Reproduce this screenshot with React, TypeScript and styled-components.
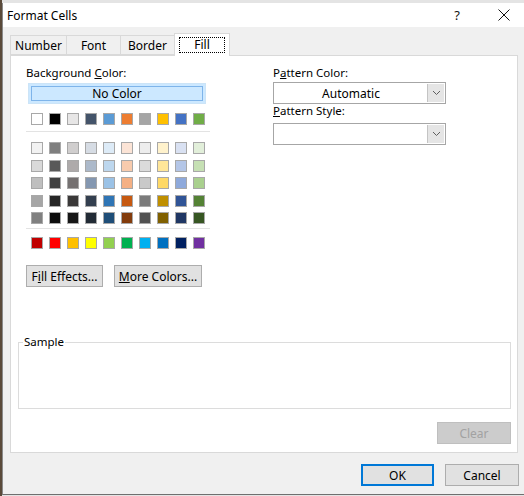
import React from "react"
import styled, { createGlobalStyle } from "styled-components"

const GlobalStyle = createGlobalStyle`
  html, body {
    margin: 0;
    padding: 0;
  }
  body {
    background: #e4e4e4;
    font-family: "Noto Sans", "Segoe UI", sans-serif;
    font-size: 11px;
    color: #000;
  }
  u {
    text-underline-offset: 1px;
  }
`

const Page = styled.div`
  width: 524px;
  height: 496px;
  padding-top: 3px;
  box-sizing: border-box;
  overflow: hidden;
  border-left: 2px solid #5a4a3a;
`

const Window = styled.div`
  width: 522px;
  height: 492px;
  box-sizing: border-box;
  border-left: 1px solid #8a8a8a;
  border-bottom: 1px solid #6f6f6f;
  background: #f0f0f0;
  display: flex;
  flex-direction: column;
`

const TitleBar = styled.div`
  height: 24px;
  flex: 0 0 24px;
  background: #fff;
  display: flex;
  align-items: center;
  padding-left: 4px;
`

const Title = styled.div`
  flex: 1;
  font-size: 12px;
`

const TitleButton = styled.div`
  width: 40px;
  height: 24px;
  display: flex;
  align-items: center;
  justify-content: center;
  font-size: 13px;
  color: #111;
  & + & {
    margin-left: 7px;
  }
`

const Body = styled.div`
  flex: 1;
  display: flex;
  flex-direction: column;
  padding: 6px 6px 0 7px;
`

const TabStrip = styled.div`
  display: flex;
  align-items: flex-end;
  height: 22px;
  position: relative;
  z-index: 1;
`

const Tab = styled.div<{ $w: number; $active?: boolean }>`
  width: ${(p) => p.$w}px;
  height: ${(p) => (p.$active ? 23 : 20)}px;
  margin-bottom: ${(p) => (p.$active ? -1 : 0)}px;
  box-sizing: border-box;
  border: 1px solid #d9d9d9;
  border-bottom: ${(p) => (p.$active ? "none" : "1px solid #d9d9d9")};
  background: ${(p) => (p.$active ? "#fff" : "#f0f0f0")};
  display: flex;
  align-items: center;
  justify-content: center;
  padding-top: 1px;
  font-size: 12px;
  & + & {
    margin-left: -1px;
  }
`

const FocusText = styled.span`
  display: flex;
  align-items: center;
  justify-content: center;
  width: 46px;
  height: 16px;
  box-sizing: border-box;
  border: 1px dotted #000;
  margin-top: -2px;
`

const Panel = styled.div`
  flex: 0 0 398px;
  box-sizing: border-box;
  background: #fff;
  border: 1px solid #d9d9d9;
  display: flex;
  flex-direction: column;
  padding: 0 6px 0 7px;
`

const TopGrid = styled.div`
  display: grid;
  grid-template-columns: 247px 173px;
  padding: 11px 0 0 8px;
`

const Column = styled.div`
  display: flex;
  flex-direction: column;
  align-items: flex-start;
`

const Label = styled.div<{ $mt?: number }>`
  line-height: 12px;
  font-size: 11.5px;
  margin-top: ${(p) => p.$mt ?? 0}px;
  white-space: nowrap;
`

const NoColorButton = styled.div`
  margin: 4px 0 0 2px;
  width: 178px;
  height: 21px;
  box-sizing: border-box;
  background: #cce8ff;
  border: 1px solid #cce4f7;
  padding: 2px;
  display: flex;
`

const NoColorInner = styled.div`
  flex: 1;
  border: 1px solid #7eb4ea;
  display: flex;
  align-items: center;
  justify-content: center;
  font-size: 12px;
`

const SwatchRow = styled.div<{ $mt: number }>`
  display: flex;
  gap: 6px;
  margin-top: ${(p) => p.$mt}px;
  padding-left: 5px;
`

const SwatchGrid = styled.div`
  display: grid;
  grid-template-columns: repeat(10, 12px);
  column-gap: 6px;
  row-gap: 5.5px;
  margin-top: 10px;
  padding-left: 5px;
`

const Swatch = styled.span<{ $c: string }>`
  display: block;
  width: 12px;
  height: 12px;
  box-sizing: border-box;
  border: 1px solid #a8a8a8;
  background: ${(p) => p.$c};
`

const Divider = styled.div<{ $mt: number }>`
  width: 184px;
  height: 1px;
  background: #e3e3e3;
  margin-top: ${(p) => p.$mt}px;
`

const ButtonRow = styled.div`
  display: flex;
  gap: 11px;
  margin-top: 16px;
`

const PushButton = styled.div<{ $w: number; $disabled?: boolean; $primary?: boolean }>`
  width: ${(p) => p.$w}px;
  height: 22px;
  box-sizing: border-box;
  border: ${(p) => (p.$primary ? "2px solid #0078d7" : p.$disabled ? "1px solid #bfbfbf" : "1px solid #adadad")};
  background: ${(p) => (p.$disabled ? "#cccccc" : "#e1e1e1")};
  color: ${(p) => (p.$disabled ? "#a2a2a2" : "#000")};
  display: flex;
  align-items: center;
  justify-content: center;
  font-size: 12px;
  white-space: nowrap;
`

const Combo = styled.div<{ $mt: number }>`
  margin-top: ${(p) => p.$mt}px;
  width: 173px;
  height: 22px;
  box-sizing: border-box;
  border: 1px solid #a6a6a6;
  background: #fff;
  display: flex;
  padding: 1px;
`

const ComboText = styled.div`
  flex: 1;
  display: flex;
  align-items: center;
  justify-content: center;
  font-size: 12px;
`

const ComboArrow = styled.div`
  width: 16px;
  background: #e5e5e5;
  border-left: 1px solid #c4c4c4;
  display: flex;
  align-items: center;
  justify-content: center;
`

const SampleBox = styled.fieldset`
  margin: 49px 0 0 0;
  padding: 0 4px;
  height: 73px;
  box-sizing: border-box;
  border: 1px solid #dcdcdc;
`

const SampleLegend = styled.legend`
  padding: 0 1px;
  line-height: 12px;
  font-size: 11.5px;
`

const ClearRow = styled.div`
  display: flex;
  justify-content: flex-end;
  margin-top: 13px;
`

const Footer = styled.div`
  display: flex;
  justify-content: flex-end;
  gap: 11px;
  padding-top: 11px;
  margin-right: -1px;
`

const themeRow = ["#FFFFFF", "#000000", "#E7E6E6", "#44546A", "#5B9BD5", "#ED7D31", "#A5A5A5", "#FFC000", "#4472C4", "#70AD47"]

const shades = [
  ["#F2F2F2", "#7F7F7F", "#D0CECE", "#D6DCE4", "#DDEBF7", "#FCE4D6", "#EDEDED", "#FFF2CC", "#D9E1F2", "#E2EFDA"],
  ["#D9D9D9", "#595959", "#AEAAAA", "#ACB9CA", "#BDD7EE", "#F8CBAD", "#DBDBDB", "#FFE699", "#B4C6E7", "#C6E0B4"],
  ["#BFBFBF", "#404040", "#757171", "#8497B0", "#9BC2E6", "#F4B084", "#C9C9C9", "#FFD966", "#8EA9DB", "#A9D08E"],
  ["#A6A6A6", "#262626", "#3A3838", "#333F4F", "#2F75B5", "#C65911", "#7B7B7B", "#BF8F00", "#305496", "#548235"],
  ["#808080", "#0D0D0D", "#161616", "#222B35", "#1F4E78", "#833C0C", "#525252", "#806000", "#203764", "#375623"],
]

const standardRow = ["#C00000", "#FF0000", "#FFC000", "#FFFF00", "#92D050", "#00B050", "#00B0F0", "#0070C0", "#002060", "#7030A0"]

const Chevron = () => (
  <svg width="9" height="6" viewBox="0 0 9 6">
    <path d="M1 1 L4.5 4.5 L8 1" fill="none" stroke="#606060" strokeWidth="1" />
  </svg>
)

const CloseIcon = () => (
  <svg width="12" height="12" viewBox="0 0 12 12">
    <path d="M0.5 0.5 L11.5 11.5 M11.5 0.5 L0.5 11.5" stroke="#111" strokeWidth="1" />
  </svg>
)

function App() {
  return (
    <Page>
      <GlobalStyle />
      <Window>
        <TitleBar>
          <Title>Format Cells</Title>
          <TitleButton>?</TitleButton>
          <TitleButton>
            <CloseIcon />
          </TitleButton>
        </TitleBar>
        <Body>
          <TabStrip>
            <Tab $w={57}>Number</Tab>
            <Tab $w={55}>Font</Tab>
            <Tab $w={55}>Border</Tab>
            <Tab $w={56} $active>
              <FocusText>Fill</FocusText>
            </Tab>
          </TabStrip>
          <Panel>
            <TopGrid>
              <Column>
                <Label>
                  Background <u>C</u>olor:
                </Label>
                <NoColorButton>
                  <NoColorInner>No Color</NoColorInner>
                </NoColorButton>
                <SwatchRow $mt={9}>
                  {themeRow.map((c) => (
                    <Swatch key={c} $c={c} />
                  ))}
                </SwatchRow>
                <Divider $mt={6} />
                <SwatchGrid>
                  {shades.flat().map((c, i) => (
                    <Swatch key={i} $c={c} />
                  ))}
                </SwatchGrid>
                <Divider $mt={4} />
                <SwatchRow $mt={8}>
                  {standardRow.map((c) => (
                    <Swatch key={c} $c={c} />
                  ))}
                </SwatchRow>
                <ButtonRow>
                  <PushButton $w={77}>
                    F<u>i</u>ll Effects...
                  </PushButton>
                  <PushButton $w={88}>
                    <u>M</u>ore Colors...
                  </PushButton>
                </ButtonRow>
              </Column>
              <Column>
                <Label>
                  P<u>a</u>ttern Color:
                </Label>
                <Combo $mt={3}>
                  <ComboText>Automatic</ComboText>
                  <ComboArrow>
                    <Chevron />
                  </ComboArrow>
                </Combo>
                <Label $mt={1}>
                  <u>P</u>attern Style:
                </Label>
                <Combo $mt={6}>
                  <ComboText />
                  <ComboArrow>
                    <Chevron />
                  </ComboArrow>
                </Combo>
              </Column>
            </TopGrid>
            <SampleBox>
              <SampleLegend>Sample</SampleLegend>
            </SampleBox>
            <ClearRow>
              <PushButton $w={74} $disabled>
                Clear
              </PushButton>
            </ClearRow>
          </Panel>
          <Footer>
            <PushButton $w={73} $primary>
              OK
            </PushButton>
            <PushButton $w={74}>Cancel</PushButton>
          </Footer>
        </Body>
      </Window>
    </Page>
  )
}

export default App
